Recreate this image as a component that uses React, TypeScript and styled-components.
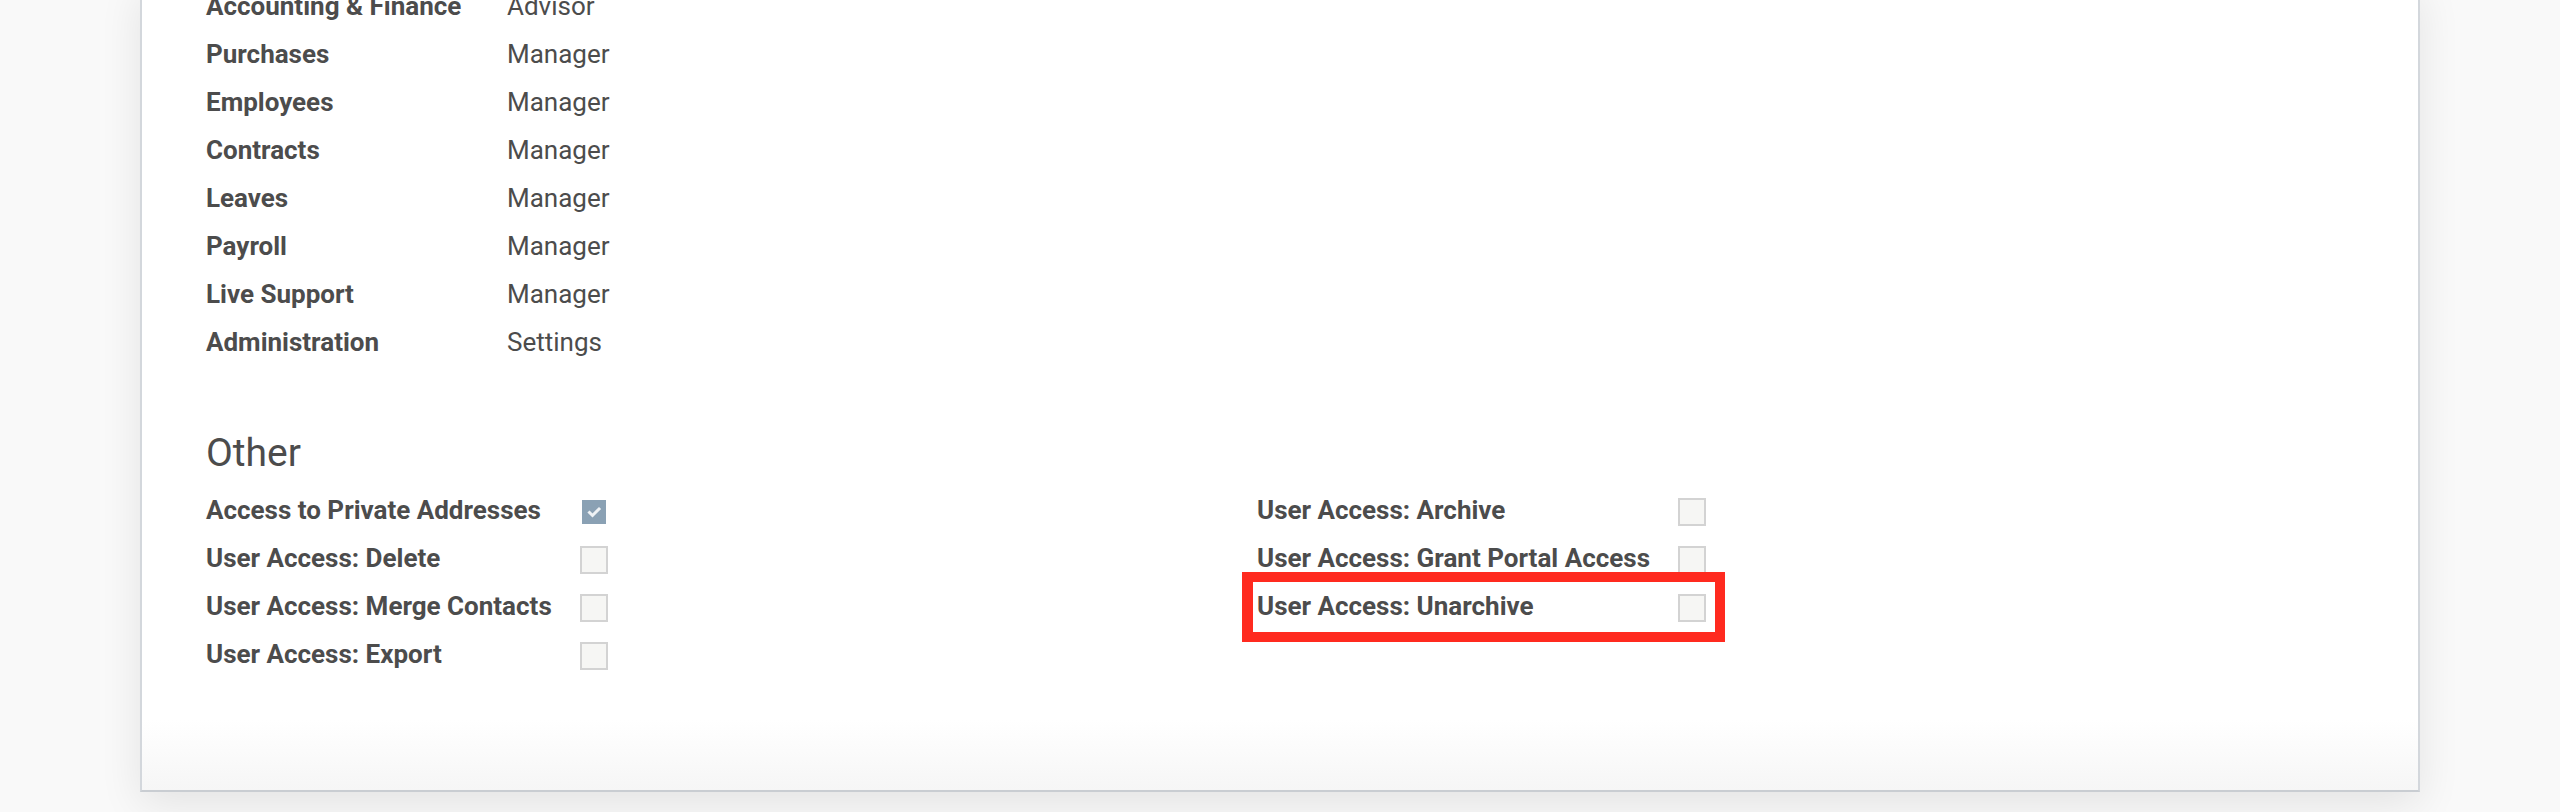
import React from "react";
import styled, { createGlobalStyle } from "styled-components";

const Global = createGlobalStyle`
  html, body { margin: 0; padding: 0; background: #f9f9f9; }
  body { font-family: Roboto, "Liberation Sans", sans-serif; color: #4c4c4c; }
`;

const Page = styled.div`
  height: 812px;
  overflow: hidden;
  background: #f9f9f9;
  padding: 0 140px;
  box-sizing: border-box;
`;

const Sheet = styled.div`
  margin-top: -18px;
  box-sizing: border-box;
  width: 100%;
  background: linear-gradient(to bottom, #ffffff calc(100% - 70px), #f6f6f6 100%);
  border: 2px solid #d3d7dc;
  border-top: none;
  border-bottom-color: #c9cdd2;
  box-shadow: 0 12px 40px rgba(0, 0, 0, 0.09);
  padding: 0 64px 112px;
`;

const Group = styled.div`
  display: flex;
  flex-direction: column;
`;

const Row = styled.div<{ $label: number; $highlight?: boolean }>`
  position: relative;
  display: grid;
  grid-template-columns: ${(p) => p.$label}px max-content;
  width: max-content;
  height: 48px;
  line-height: 48px;
  font-size: 26px;
  ${(p) =>
    p.$highlight &&
    `
    &::after {
      content: "";
      position: absolute;
      top: -10px;
      bottom: -12px;
      left: -15px;
      right: -19px;
      border: 10px solid #ff2a1f;
      border-left-width: 11px;
      pointer-events: none;
    }
  `}
`;

const Label = styled.div`
  font-weight: 700;
  white-space: nowrap;
`;

const Value = styled.div`
  font-weight: 400;
  white-space: nowrap;
`;

const Heading = styled.h2`
  margin: 64px 0 10px;
  font-size: 39px;
  line-height: 46px;
  font-weight: 400;
  color: #4c4c4c;
`;

const Columns = styled.div`
  display: grid;
  grid-template-columns: 1051px 1fr;
`;

const BoxCell = styled.div`
  display: flex;
  align-items: center;
  justify-content: center;
  width: 28px;
  height: 48px;
  padding-top: 4px;
  box-sizing: border-box;
`;

const Box = styled.span<{ $checked?: boolean }>`
  display: flex;
  align-items: center;
  justify-content: center;
  box-sizing: border-box;
  width: ${(p) => (p.$checked ? 24 : 28)}px;
  height: ${(p) => (p.$checked ? 24 : 28)}px;
  background: ${(p) => (p.$checked ? "#8aa1b4" : "#f6f6f4")};
  border: ${(p) => (p.$checked ? "none" : "2px solid #d3d3d3")};
`;

const Checkbox = ({ checked }: { checked?: boolean }) => (
  <BoxCell>
    <Box $checked={checked}>
      {checked && (
        <svg width="24" height="24" viewBox="0 0 24 24">
          <polyline
            points="7.5,12.5 10.5,15.5 17,9"
            fill="none"
            stroke="#eef2f5"
            strokeWidth="3"
            strokeLinecap="square"
          />
        </svg>
      )}
    </Box>
  </BoxCell>
);

const apps: [string, string][] = [
  ["Accounting & Finance", "Advisor"],
  ["Purchases", "Manager"],
  ["Employees", "Manager"],
  ["Contracts", "Manager"],
  ["Leaves", "Manager"],
  ["Payroll", "Manager"],
  ["Live Support", "Manager"],
  ["Administration", "Settings"],
];

const leftOther: [string, boolean][] = [
  ["Access to Private Addresses", true],
  ["User Access: Delete", false],
  ["User Access: Merge Contacts", false],
  ["User Access: Export", false],
];

const rightOther: [string, boolean, boolean][] = [
  ["User Access: Archive", false, false],
  ["User Access: Grant Portal Access", false, false],
  ["User Access: Unarchive", false, true],
];

export default function App() {
  return (
    <>
      <Global />
      <Page>
        <Sheet>
          <Group>
            {apps.map(([l, v]) => (
              <Row key={l} $label={301}>
                <Label>{l}</Label>
                <Value>{v}</Value>
              </Row>
            ))}
          </Group>
          <Heading>Other</Heading>
          <Columns>
            <Group>
              {leftOther.map(([l, c]) => (
                <Row key={l} $label={374}>
                  <Label>{l}</Label>
                  <Checkbox checked={c} />
                </Row>
              ))}
            </Group>
            <Group>
              {rightOther.map(([l, c, h]) => (
                <Row key={l} $label={421} $highlight={h}>
                  <Label>{l}</Label>
                  <Checkbox checked={c} />
                </Row>
              ))}
            </Group>
          </Columns>
        </Sheet>
      </Page>
    </>
  );
}
